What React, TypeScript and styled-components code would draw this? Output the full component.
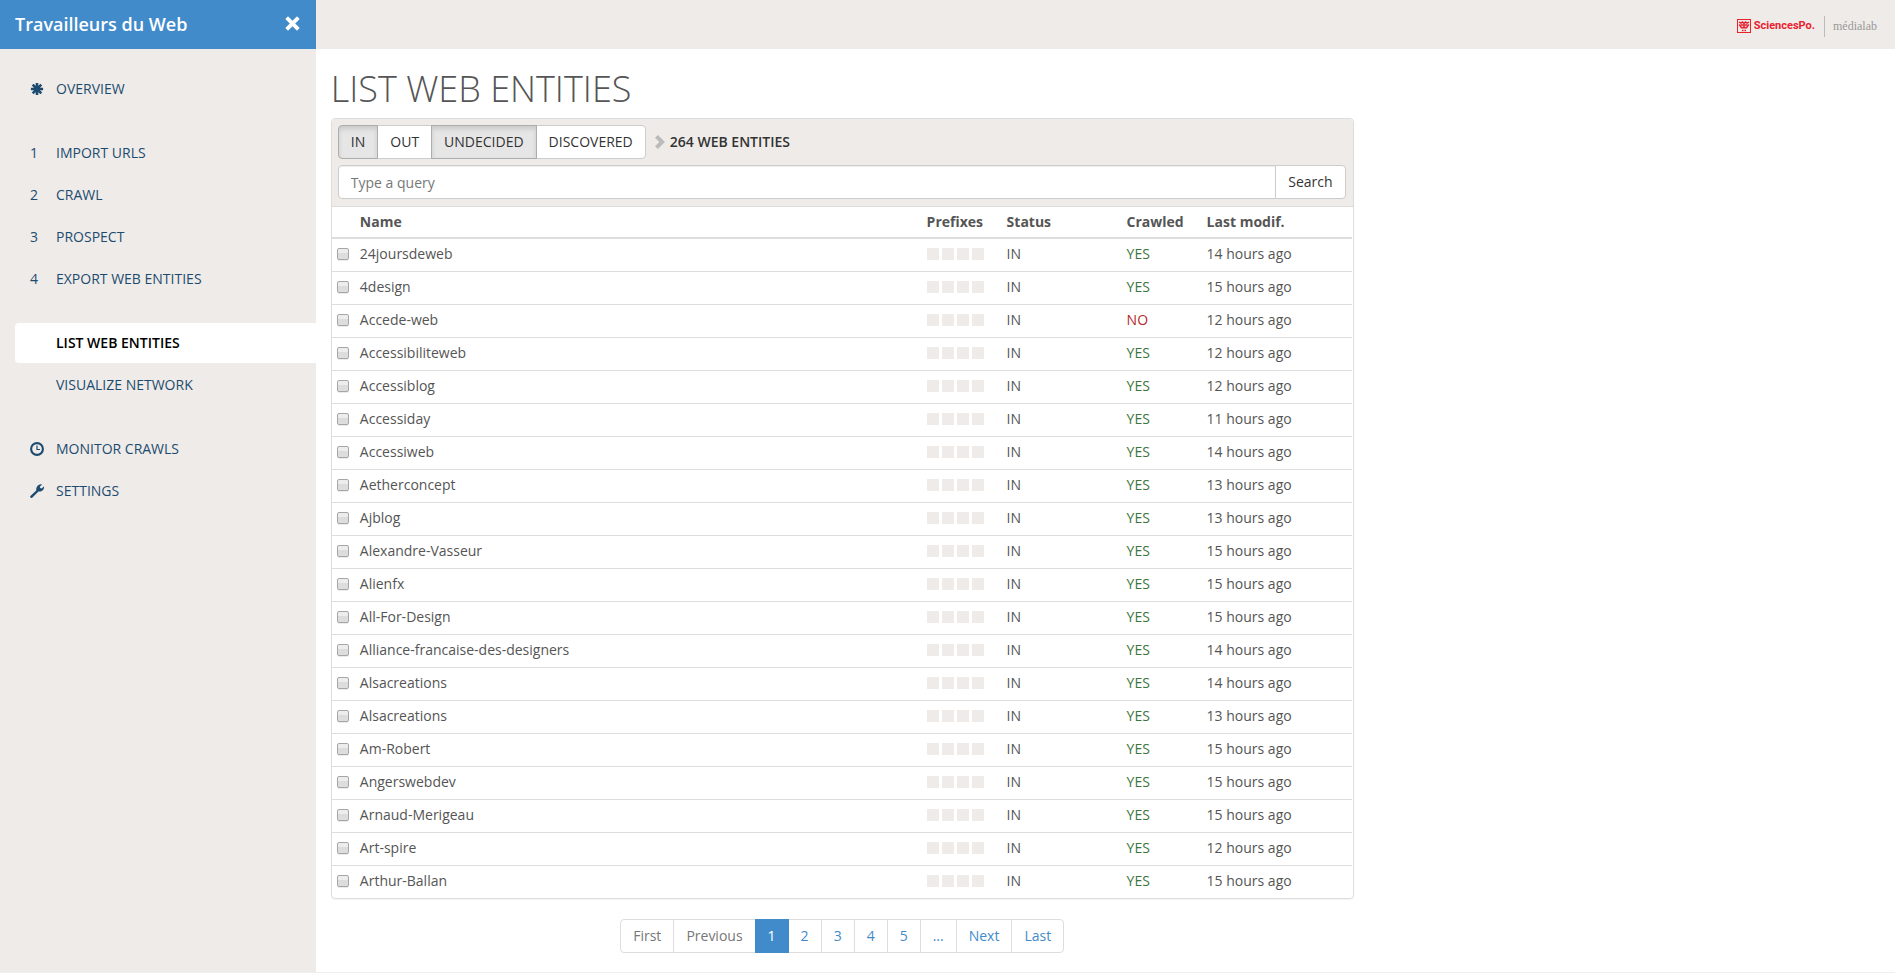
import React, { useState } from 'react';
import styled, { createGlobalStyle, css } from 'styled-components';

const GlobalStyle = createGlobalStyle`
  *, *::before, *::after { box-sizing: border-box; }
  body {
    margin: 0;
    background: #fff;
    color: #555;
    font: 14px/20px "Open Sans", sans-serif;
  }
  button, input { font: inherit; }
  a { text-decoration: none; }
`;

const Page = styled.div`
  display: grid;
  grid-template-columns: minmax(0, 1fr) minmax(0, 5fr);
  grid-template-rows: 49px 1fr;
  min-height: 100vh;
  border-bottom: 1px solid #eee;
`;

const ProjectBar = styled.div`
  display: flex;
  align-items: center;
  justify-content: space-between;
  padding: 0 16px 2px 15px;
  background: #428bca;
`;

const ProjectName = styled.a`
  color: #fff;
  font-size: 18px;
  font-weight: 600;
`;

const CloseButton = styled.button`
  display: flex;
  padding: 0;
  border: 0;
  background: none;
  color: #fff;
  cursor: pointer;
`;

const TopBar = styled.header`
  display: flex;
  align-items: center;
  justify-content: flex-end;
  padding: 3px 18px 0 15px;
  background: #efebe8;
`;

const LogoLink = styled.a`
  display: flex;
  align-items: center;
  gap: 3px;
`;

const SchoolName = styled.span`
  color: #e9212f;
  font: bold 11px/20px Roboto, Arial, sans-serif;
`;

const LabName = styled.span`
  margin-left: 6px;
  padding-left: 8px;
  border-left: 1px solid #bbb;
  color: #999;
  font: 12px/21px "Liberation Serif", "Times New Roman", serif;
`;

const Sidebar = styled.nav`
  display: flex;
  flex-direction: column;
  gap: 24px;
  padding: 20px 0 20px 15px;
  background: #efebe8;
`;

const NavGroup = styled.ul`
  display: flex;
  flex-direction: column;
  gap: 2px;
  margin: 0;
  padding: 0;
  list-style: none;
`;

const NavLink = styled.a<{ $active?: boolean }>`
  display: flex;
  align-items: center;
  height: 40px;
  padding: 0 15px;
  border-radius: 4px 0 0 4px;
  color: #1d4b70;
  text-transform: uppercase;
  ${(p) =>
    p.$active &&
    css`
      background: #fff;
      color: #000;
      font-weight: 600;
    `}
`;

const NavMark = styled.span`
  display: flex;
  flex: 0 0 26px;
`;

const Content = styled.main`
  padding: 0 15px 18px;
`;

const Column = styled.div`
  width: calc((100% + 30px) * 2 / 3 - 30px);
`;

const Title = styled.h1`
  margin: 20px 0 9px;
  font-size: 36px;
  line-height: 40px;
  font-weight: 300;
  text-transform: uppercase;
`;

const Panel = styled.section`
  border: 1px solid #ddd;
  border-radius: 4px;
  box-shadow: 0 1px 1px rgba(0, 0, 0, 0.05);
  overflow: hidden;
`;

const PanelHead = styled.div`
  display: flex;
  flex-direction: column;
  gap: 6px;
  padding: 6px 7px 7px 6px;
  border-bottom: 1px solid #ddd;
  background: #efebe8;
`;

const FilterRow = styled.div`
  display: flex;
  align-items: center;
`;

const FilterButton = styled.button<{ $on: boolean }>`
  position: relative;
  height: 34px;
  padding: 0 12px;
  border: 1px solid #ccc;
  background: #fff;
  color: #333;
  cursor: pointer;
  & + & { margin-left: -1px; }
  &:first-child { border-radius: 4px 0 0 4px; }
  &:last-child { border-radius: 0 4px 4px 0; }
  ${(p) =>
    p.$on &&
    css`
      z-index: 1;
      border-color: #adadad;
      background: #e6e6e6;
      box-shadow: inset 0 3px 5px rgba(0, 0, 0, 0.125);
    `}
`;

const Filters = styled.div`
  display: flex;
`;

const Total = styled.span`
  display: flex;
  align-items: center;
  gap: 5px;
  margin-left: 9px;
  color: #333;
  font-weight: 600;
  svg { color: #bbb; }
`;

const SearchRow = styled.form`
  display: flex;
`;

const QueryInput = styled.input`
  flex: 1;
  min-width: 0;
  height: 34px;
  padding: 0 12px;
  border: 1px solid #ccc;
  border-radius: 4px 0 0 4px;
  box-shadow: inset 0 1px 1px rgba(0, 0, 0, 0.075);
  color: #555;
  &::placeholder { color: #777; opacity: 1; }
`;

const SearchButton = styled.button`
  margin-left: -1px;
  height: 34px;
  padding: 0 12px;
  border: 1px solid #ccc;
  border-radius: 0 4px 4px 0;
  background: #fff;
  color: #333;
  cursor: pointer;
`;

const TableArea = styled.div`
  padding-right: 1px;
`;

const EntityTable = styled.table`
  width: 100%;
  border-collapse: separate;
  border-spacing: 0;
  table-layout: fixed;
`;

const HeadCell = styled.th<{ $width?: number }>`
  width: ${(p) => (p.$width ? `${p.$width}px` : 'auto')};
  height: 32px;
  padding: 0 5px;
  border-bottom: 2px solid #ddd;
  font-weight: 700;
  text-align: left;
`;

const tones = { plain: '#555', yes: '#3c763d', no: '#b52b27' };

const Cell = styled.td<{ $tone?: keyof typeof tones }>`
  height: 33px;
  padding: 0 5px 2px;
  color: ${(p) => tones[p.$tone ?? 'plain']};
  tr + tr > & { border-top: 1px solid #ddd; }
  tr:first-child > & { height: 32px; }
`;

const CheckBox = styled.input`
  appearance: none;
  display: block;
  width: 12px;
  height: 12px;
  margin: 0;
  border: 1px solid #a6a6a6;
  border-radius: 2px;
  background: linear-gradient(#ededed 38%, #dcdcdc 38%, #dedede);
  box-shadow: 0 1px 0 rgba(0, 0, 0, 0.08);
  &:checked { background: #428bca; }
`;

const Prefixes = styled.div`
  display: flex;
  gap: 3px;
`;

const PrefixMark = styled.span`
  width: 12px;
  height: 12px;
  background: #efebe8;
`;

const Pager = styled.ul`
  display: flex;
  justify-content: center;
  margin: 20px 0 0;
  padding: 0;
  list-style: none;
`;

const PageItem = styled.li`
  & + & { margin-left: -1px; }
  &:first-child > a { border-radius: 4px 0 0 4px; }
  &:last-child > a { border-radius: 0 4px 4px 0; }
`;

const PageLink = styled.a<{ $current?: boolean; $disabled?: boolean }>`
  display: block;
  position: relative;
  z-index: ${(p) => (p.$current ? 1 : 0)};
  padding: 6px 12px;
  border: 1px solid ${(p) => (p.$current ? '#428bca' : '#ddd')};
  background: ${(p) => (p.$current ? '#428bca' : '#fff')};
  color: ${(p) => (p.$current ? '#fff' : p.$disabled ? '#777' : '#428bca')};
`;

const AsteriskIcon = () => (
  <svg width="14" height="14" viewBox="0 0 14 14" stroke="currentColor" strokeWidth="2.6" aria-hidden="true">
    <path d="M7 .9v12.200M.9 7h12.200M2.700 2.700l8.600 8.600M11.300 2.700l-8.600 8.600" />
  </svg>
);

const ClockIcon = () => (
  <svg width="14" height="14" viewBox="0 0 14 14" fill="none" stroke="currentColor" aria-hidden="true">
    <circle cx="7" cy="7" r="5.9" strokeWidth="2.1" />
    <path d="M7 3.5V7.5H10" strokeWidth="1.2" />
  </svg>
);

const WrenchIcon = () => (
  <svg width="14" height="14" viewBox="0 0 14 14" fill="currentColor" aria-hidden="true">
    <path d="M.4 12.1 6.300 6.600C5.900 4.300 6.800 2.100 8.600 1 9.700.3 11 .1 12 .5L9.800 2.700l.5 1.400 1.500.4L14 2.300c.3 1.300-.2 2.900-1.200 3.900-1.200 1.200-2.800 1.600-4.300 1.200L2.200 13.700c-.5.4-1.200.4-1.700-.1-.5-.5-.5-1.100-.1-1.500z" />
  </svg>
);

const CrossIcon = () => (
  <svg width="15" height="15" viewBox="0 0 16 16" fill="currentColor" aria-hidden="true">
    <path d="M3.700.8 8 5.100 12.300.8q.5-.5 1 0l1.900 1.900q.5.5 0 1L10.900 8l4.300 4.300q.5.5 0 1l-1.900 1.900q-.5.5-1 0L8 10.900l-4.300 4.300q-.5.5-1 0L.8 13.300q-.5-.5 0-1L5.100 8 .8 3.700q-.5-.5 0-1L2.700.8q.5-.5 1 0z" />
  </svg>
);

const ChevronIcon = () => (
  <svg width="10" height="14" viewBox="0 0 10 14" fill="currentColor" aria-hidden="true">
    <path d="M.3 2.500 2.600.3q.3-.3.600 0L9.700 6.700q.3.300 0 .6L3.200 13.700q-.3.300-.6 0L.3 11.500q-.3-.3 0-.6L4.300 7 .3 3.100q-.3-.3 0-.6z" />
  </svg>
);

const CrestIcon = () => (
  <svg width="14" height="14" viewBox="0 0 14 14" fill="none" stroke="#e9212f" aria-hidden="true">
    <rect x=".5" y=".5" width="13" height="13" />
    <path d="M2 3.200 4 4.200 5.500 3 7 4.500 8.500 3 10 4.200l2-1M2.200 5.500 4.500 8.700h5l2.300-3.200" strokeWidth="1.500" />
    <path d="M3.500 6h2.500M8 6h2.500M7 5v3.500M5 11.500h1M6.500 11.500h1M8 11.500h1" strokeWidth="1.700" />
  </svg>
);

interface NavEntry {
  label: string;
  mark?: React.ReactNode;
  active?: boolean;
}

const navGroups: NavEntry[][] = [
  [{ label: 'Overview', mark: <AsteriskIcon /> }],
  [
    { label: 'Import URLs', mark: '1' },
    { label: 'Crawl', mark: '2' },
    { label: 'Prospect', mark: '3' },
    { label: 'Export web entities', mark: '4' },
  ],
  [{ label: 'List web entities', active: true }, { label: 'Visualize network' }],
  [
    { label: 'Monitor crawls', mark: <ClockIcon /> },
    { label: 'Settings', mark: <WrenchIcon /> },
  ],
];

const entities: [name: string, crawled: boolean, hours: number][] = [
  ['24joursdeweb', true, 14],
  ['4design', true, 15],
  ['Accede-web', false, 12],
  ['Accessibiliteweb', true, 12],
  ['Accessiblog', true, 12],
  ['Accessiday', true, 11],
  ['Accessiweb', true, 14],
  ['Aetherconcept', true, 13],
  ['Ajblog', true, 13],
  ['Alexandre-Vasseur', true, 15],
  ['Alienfx', true, 15],
  ['All-For-Design', true, 15],
  ['Alliance-francaise-des-designers', true, 14],
  ['Alsacreations', true, 14],
  ['Alsacreations', true, 13],
  ['Am-Robert', true, 15],
  ['Angerswebdev', true, 15],
  ['Arnaud-Merigeau', true, 15],
  ['Art-spire', true, 12],
  ['Arthur-Ballan', true, 15],
];

const pages = ['First', 'Previous', '1', '2', '3', '4', '5', '...', 'Next', 'Last'];

export default function App() {
  const [filters, setFilters] = useState<Record<string, boolean>>({
    IN: true,
    OUT: false,
    UNDECIDED: true,
    DISCOVERED: false,
  });

  return (
    <>
      <GlobalStyle />
      <Page>
        <ProjectBar>
          <ProjectName href="#overview">Travailleurs du Web</ProjectName>
          <CloseButton type="button" aria-label="Close project">
            <CrossIcon />
          </CloseButton>
        </ProjectBar>
        <TopBar>
          <LogoLink href="#medialab">
            <CrestIcon />
            <SchoolName>SciencesPo.</SchoolName>
            <LabName>médialab</LabName>
          </LogoLink>
        </TopBar>
        <Sidebar>
          {navGroups.map((group, i) => (
            <NavGroup key={i}>
              {group.map(({ label, mark, active }) => (
                <li key={label}>
                  <NavLink href="#" $active={active} aria-current={active ? 'page' : undefined}>
                    <NavMark>{mark}</NavMark>
                    {label}
                  </NavLink>
                </li>
              ))}
            </NavGroup>
          ))}
        </Sidebar>
        <Content>
          <Column>
            <Title>List web entities</Title>
            <Panel>
              <PanelHead>
                <FilterRow>
                  <Filters>
                    {Object.keys(filters).map((name) => (
                      <FilterButton
                        key={name}
                        type="button"
                        $on={filters[name]}
                        aria-pressed={filters[name]}
                        onClick={() => setFilters({ ...filters, [name]: !filters[name] })}
                      >
                        {name}
                      </FilterButton>
                    ))}
                  </Filters>
                  <Total>
                    <ChevronIcon />
                    264 WEB ENTITIES
                  </Total>
                </FilterRow>
                <SearchRow onSubmit={(e) => e.preventDefault()}>
                  <QueryInput type="text" placeholder="Type a query" aria-label="Query" />
                  <SearchButton type="submit">Search</SearchButton>
                </SearchRow>
              </PanelHead>
              <TableArea>
                <EntityTable>
                  <thead>
                    <tr>
                      <HeadCell $width={23} aria-label="Selection" />
                      <HeadCell>Name</HeadCell>
                      <HeadCell $width={80}>Prefixes</HeadCell>
                      <HeadCell $width={120}>Status</HeadCell>
                      <HeadCell $width={80}>Crawled</HeadCell>
                      <HeadCell $width={150}>Last modif.</HeadCell>
                    </tr>
                  </thead>
                  <tbody>
                    {entities.map(([name, crawled, hours], i) => (
                      <tr key={i}>
                        <Cell>
                          <CheckBox type="checkbox" id={`entity-${i}`} />
                        </Cell>
                        <Cell>
                          <label htmlFor={`entity-${i}`}>{name}</label>
                        </Cell>
                        <Cell>
                          <Prefixes>
                            <PrefixMark />
                            <PrefixMark />
                            <PrefixMark />
                            <PrefixMark />
                          </Prefixes>
                        </Cell>
                        <Cell>IN</Cell>
                        <Cell $tone={crawled ? 'yes' : 'no'}>{crawled ? 'YES' : 'NO'}</Cell>
                        <Cell>{hours} hours ago</Cell>
                      </tr>
                    ))}
                  </tbody>
                </EntityTable>
              </TableArea>
            </Panel>
            <Pager>
              {pages.map((label, i) => (
                <PageItem key={label}>
                  <PageLink href="#" $current={label === '1'} $disabled={i < 2}>
                    {label}
                  </PageLink>
                </PageItem>
              ))}
            </Pager>
          </Column>
        </Content>
      </Page>
    </>
  );
}
